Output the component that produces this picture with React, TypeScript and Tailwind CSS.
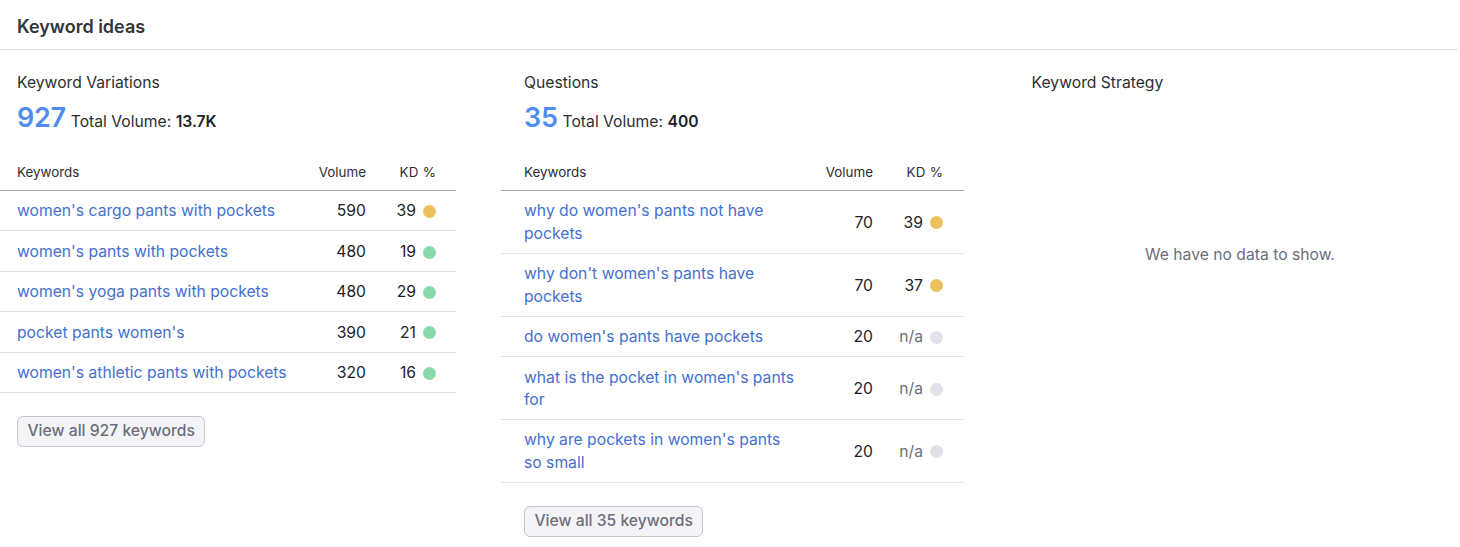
const kdDot = {
  yellow: "bg-[#ecc05c]",
  green: "bg-[#8ad9aa]",
  gray: "bg-[#e0e1e9]",
};

type Row = { keyword: string; volume: string; kd: string; dot: keyof typeof kdDot };

const variations: Row[] = [
  { keyword: "women's cargo pants with pockets", volume: "590", kd: "39", dot: "yellow" },
  { keyword: "women's pants with pockets", volume: "480", kd: "19", dot: "green" },
  { keyword: "women's yoga pants with pockets", volume: "480", kd: "29", dot: "green" },
  { keyword: "pocket pants women's", volume: "390", kd: "21", dot: "green" },
  { keyword: "women's athletic pants with pockets", volume: "320", kd: "16", dot: "green" },
];

const questions: Row[] = [
  { keyword: "why do women's pants not have pockets", volume: "70", kd: "39", dot: "yellow" },
  { keyword: "why don't women's pants have pockets", volume: "70", kd: "37", dot: "yellow" },
  { keyword: "do women's pants have pockets", volume: "20", kd: "n/a", dot: "gray" },
  { keyword: "what is the pocket in women's pants for", volume: "20", kd: "n/a", dot: "gray" },
  { keyword: "why are pockets in women's pants so small", volume: "20", kd: "n/a", dot: "gray" },
];

function KeywordColumn({
  title,
  count,
  total,
  rows,
  columnClass,
  tableClass,
  rowPadding,
}: {
  title: string;
  count: string;
  total: string;
  rows: Row[];
  columnClass: string;
  tableClass: string;
  rowPadding: string;
}) {
  return (
    <div className={`shrink-0 ${columnClass}`}>
      <h3 className="text-[15.7px] leading-[20px] text-[#2b2e33]">{title}</h3>
      <div className="mt-[7px] flex h-[36px] items-baseline">
        <span className="text-[27px] leading-[36px] font-semibold tracking-[-0.3px] text-[#4f8ef0]">{count}</span>
        <span className="ml-[5px] text-[15.7px] text-[#2b2e33]">
          Total Volume: <span className="font-semibold text-[#1f2126]">{total}</span>
        </span>
      </div>
      <div className={tableClass}>
        <div
          className={`flex h-[37px] items-center justify-between border-b border-[#a4a6b3] pt-[1px] text-[13.4px] text-[#2b2e33] ${rowPadding}`}
        >
          <span>Keywords</span>
          <div className="flex">
            <span className="w-[60px] text-right">Volume</span>
            <span className="w-[70px] text-right tracking-[0.2px]">KD %</span>
          </div>
        </div>
        {rows.map((row) => (
          <div
            key={row.keyword}
            className={`flex items-center justify-between border-b border-[#e0e1e9] pt-[9.45px] pb-[7.45px] text-[15.7px] leading-[22.5px] ${rowPadding}`}
          >
            <a className="w-[275px] text-[#4470cf]">{row.keyword}</a>
            <div className="flex items-center">
              <span className="w-[60px] text-right text-[#1f2126]">{row.volume}</span>
              <span className={`w-[50px] text-right ${row.kd === "n/a" ? "text-[#6c6e79]" : "text-[#1f2126]"}`}>
                {row.kd}
              </span>
              <span className={`ml-[7px] h-[13px] w-[13px] rounded-full ${kdDot[row.dot]}`} />
            </div>
          </div>
        ))}
      </div>
      <button className="mt-[23px] h-[31px] rounded-[6px] border border-[#c4c7cf] bg-[#f4f4f8] px-[9.5px] pb-[2px] text-[15.7px] font-medium text-[#6c6e79]">
        View all {count} keywords
      </button>
    </div>
  );
}

export default function App() {
  return (
    <div className="h-[547px] overflow-hidden bg-white font-['Inter',sans-serif]">
      <div className="mr-[2px] flex h-[50px] items-center border-b border-[#e0e1e9] px-[17px] pt-[4px]">
        <h2 className="text-[18px] font-semibold text-[#333539]">Keyword ideas</h2>
      </div>
      <div className="flex px-[17px] pt-[23px]">
        <KeywordColumn
          title="Keyword Variations"
          count="927"
          total="13.7K"
          rows={variations}
          columnClass="w-[507px]"
          tableClass="mt-[18px] -ml-[17px] w-[456px]"
          rowPadding="pl-[17px] pr-[20px]"
        />
        <KeywordColumn
          title="Questions"
          count="35"
          total="400"
          rows={questions}
          columnClass="w-[507.6px]"
          tableClass="mt-[18px] -ml-[23px] w-[463px]"
          rowPadding="pl-[23px] pr-[21px]"
        />
        <div>
          <h3 className="text-[15.7px] leading-[20px] text-[#2b2e33]">Keyword Strategy</h3>
          <p className="mt-[152px] ml-[113.5px] text-[15.7px] leading-[20px] text-[#6c6e79]">We have no data to show.</p>
        </div>
      </div>
    </div>
  );
}
